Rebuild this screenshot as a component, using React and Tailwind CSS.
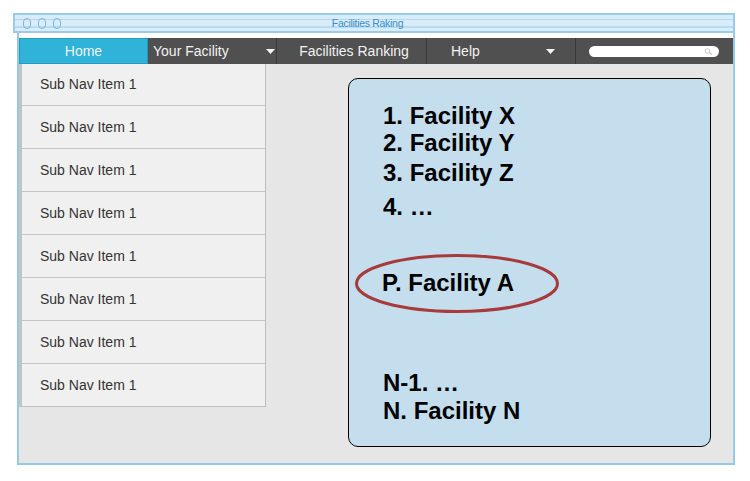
import React from 'react';

const subNav = Array.from({ length: 8 }, () => 'Sub Nav Item 1');

function Caret() {
  return (
    <svg width="9" height="5" viewBox="0 0 9 5" className="block">
      <path d="M0 0 H9 L4.5 5 Z" fill="#f4f4f4" />
    </svg>
  );
}

function TitleBar() {
  return (
    <div className="relative h-[20px] ml-[13px] w-[722px] border-2 border-[#9ccbe8] bg-[#d8ecf9]">
      <div className="absolute left-0 right-0 top-[4px] h-px bg-[#b3d8f0]" />
      <div className="absolute left-0 right-0 top-[11px] h-[2px] bg-[#b8dbf1]" />
      <div className="relative flex items-center h-full pl-[8px] pr-[7px]">
        <div className="flex gap-[7px]">
          <span className="w-[8px] h-[11px] rounded-full border border-[#7cb6df]" />
          <span className="w-[8px] h-[11px] rounded-full border border-[#7cb6df]" />
          <span className="w-[8px] h-[11px] rounded-full border border-[#7cb6df]" />
        </div>
        <div className="flex-1 text-center text-[10.5px] leading-none text-[#3b8dcc] tracking-[-0.3px] pr-[52px]">
          Facilities Raking
        </div>
      </div>
    </div>
  );
}

function NavBar() {
  return (
    <div className="flex h-[26px] bg-[#505050] text-[14px] text-[#f2f2f2]">
      <div className="w-[129px] flex items-center justify-center pt-px bg-[#2fb3d8] border border-[#2799bb]">
        Home
      </div>
      <div className="w-[129px] flex items-center pt-px pl-[5px] pr-[1px] border-r border-[#393939]">
        <span className="flex-1">Your Facility</span>
        <Caret />
      </div>
      <div className="w-[150px] flex items-center justify-center pt-px pl-[5px] border-r border-[#393939]">
        Facilities Ranking
      </div>
      <div className="w-[149px] flex items-center pt-px pl-[24px] pr-[20px] border-r border-[#393939]">
        <span className="flex-1">Help</span>
        <Caret />
      </div>
      <div className="flex-1 flex items-center pl-[13px] pr-[14px]">
        <div className="flex items-center justify-end w-full h-[11px] rounded-full bg-white pr-[6px]">
          <svg width="9" height="7" viewBox="0 0 9 7">
            <circle cx="3.5" cy="3" r="2.3" fill="none" stroke="#c4c4c4" strokeWidth="0.9" />
            <path d="M5.3 4.6 L8 6.4" stroke="#c4c4c4" strokeWidth="1.2" />
          </svg>
        </div>
      </div>
    </div>
  );
}

function Sidebar() {
  return (
    <div className="w-[247px] self-start bg-[#f0f0f0] border-l-[3px] border-l-[#c3c3c3] border-r border-r-[#bdbdbd] border-b border-b-[#c0c0c0]">
      {subNav.map((label, i) => (
        <div
          key={i}
          className={`flex items-center pl-[18px] text-[14px] text-[#333] ${
            i === 0 ? 'h-[41px]' : 'h-[43px] border-t border-[#c6c6c6]'
          }`}
        >
          {label}
        </div>
      ))}
    </div>
  );
}

function RankingPanel() {
  return (
    <div className="relative ml-[82px] mt-[14px] w-[363px] h-[369px] rounded-[10px] border border-black bg-[#c5deed] text-[24px] font-bold text-black leading-[28px]">
      <div className="flex flex-col pl-[34px] pt-[23px]">
        <div>1. Facility X</div>
        <div className="-mt-px">2. Facility Y</div>
        <div className="mt-[2px]">3. Facility Z</div>
        <div className="mt-[6px]">4. …</div>
        <div className="mt-[48px] -ml-px">P. Facility A</div>
        <div className="mt-[72px]">N-1. …</div>
        <div>N. Facility N</div>
      </div>
      <svg
        className="absolute left-[5px] top-[174px]"
        width="206"
        height="61"
        viewBox="0 0 206 61"
      >
        <ellipse cx="103" cy="30.5" rx="100.5" ry="28" fill="none" stroke="#a73a3b" strokeWidth="3" />
      </svg>
    </div>
  );
}

export default function App() {
  return (
    <div className="w-[750px] h-[481px] bg-white pt-[13px]" style={{ fontFamily: '"Liberation Sans", Arial, sans-serif' }}>
      <TitleBar />
      <div className="ml-[17px] w-[718px] h-[432px] border-x-2 border-b-2 border-[#97c8e6] pt-[5px] flex flex-col">
        <NavBar />
        <div className="flex-1 flex bg-[#e6e6e6]">
          <Sidebar />
          <RankingPanel />
        </div>
      </div>
    </div>
  );
}
